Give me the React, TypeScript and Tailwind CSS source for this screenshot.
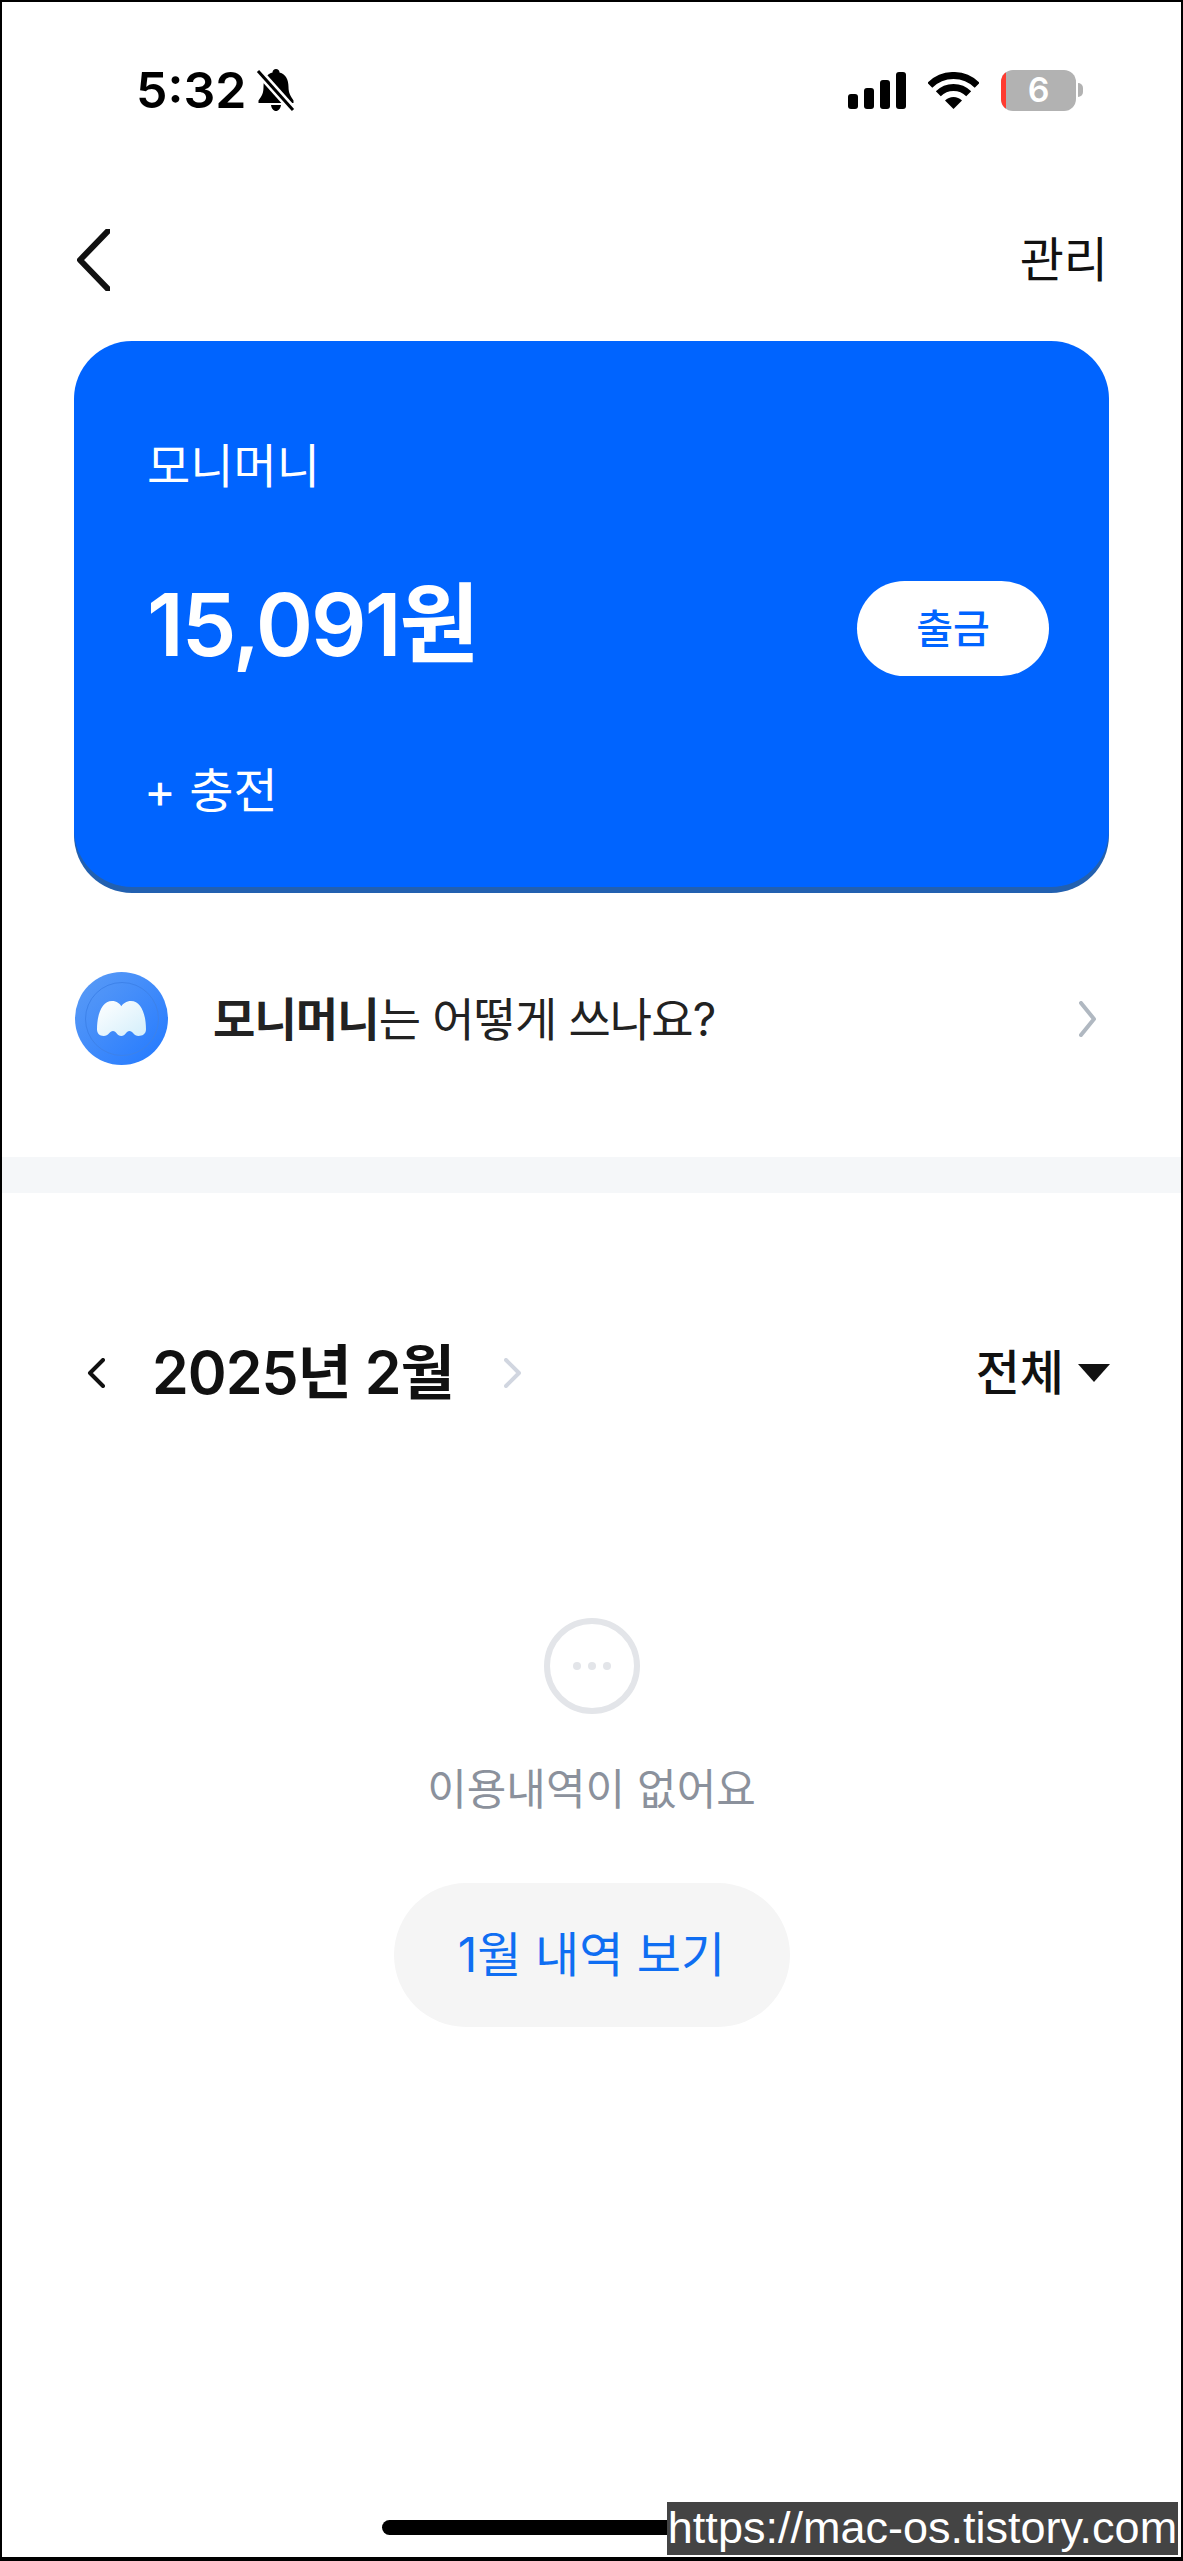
function BellSlash() {
  return (
    <svg width="40" height="42" viewBox="0 0 40 42">
      <path
        fill="#000"
        d="M20 0c2 0 3.500 1.500 3.500 3.500C30 5 32.500 11 32.500 18c0 6 2 9 5 13.500V34H2.500v-2.500C6 27 7.500 24 7.500 18c0-7 2.500-13 9-14.500C16.500 1.500 18 0 20 0zM15 36h10c-.5 3.500-2.500 6-5 6s-4.500-2.500-5-6z"
      />
      <path d="M3 3l34 38" stroke="#fff" strokeWidth="8" />
      <path d="M2 2l35 39" stroke="#000" strokeWidth="3" />
    </svg>
  );
}

function Signal() {
  return (
    <div className="flex items-end gap-[6px] h-[37px]">
      <div className="w-[10px] h-[15px] rounded-[3px] bg-black" />
      <div className="w-[10px] h-[21px] rounded-[3px] bg-black" />
      <div className="w-[10px] h-[29px] rounded-[3px] bg-black" />
      <div className="w-[10px] h-[37px] rounded-[3px] bg-black" />
    </div>
  );
}

function Wifi() {
  return (
    <svg width="51" height="37" viewBox="0 0 51 37">
      <path d="M1.800 13.300A33.500 33.500 0 0 1 49.200 13.300" fill="none" stroke="#000" strokeWidth="7" />
      <path d="M10.300 21.800A21.500 21.500 0 0 1 40.700 21.800" fill="none" stroke="#000" strokeWidth="7" />
      <path d="M25.500 37L17 28.500A12 12 0 0 1 34 28.500Z" fill="#000" />
    </svg>
  );
}

function Battery() {
  return (
    <div className="flex items-center gap-[2px]">
      <div className="flex w-[75px] h-[41px] rounded-[12px] overflow-hidden bg-[#b2b2b2]">
        <div className="w-[5px] bg-[#ff3b30]" />
        <div className="flex-1 flex items-center justify-center text-white font-semibold text-[34px] leading-none pr-[5px]">
          6
        </div>
      </div>
      <div className="w-[5px] h-[14px] rounded-r-full bg-[#b2b2b2]" />
    </div>
  );
}

function MoniCoin() {
  return (
    <div className="w-[93px] h-[93px] shrink-0 rounded-full bg-gradient-to-br from-[#5c9cf5] to-[#1f78ff] flex items-center justify-center">
      <div className="w-[74px] h-[74px] rounded-full border border-[#3d82ea] flex items-center justify-center">
        <svg width="49" height="35" viewBox="0 0 147 105">
          <defs>
            <linearGradient id="moni" x1="0" y1="0" x2="1" y2="1">
              <stop offset="0" stopColor="#ffffff" />
              <stop offset="1" stopColor="#d3eefb" />
            </linearGradient>
          </defs>
          <path
            fill="url(#moni)"
            d="M0 85C0 40 15 0 45 0C60 0 68 8 73 16C78 8 88 0 102 0C132 0 147 40 147 85C147 100 135 105 125 105C110 105 108 90 97 90C88 90 85 105 73 105C60 105 58 90 48 90C38 90 35 105 20 105C8 105 0 98 0 85Z"
          />
        </svg>
      </div>
    </div>
  );
}

function Chevron({ dir, color, w, h, sw }: { dir: "left" | "right"; color: string; w: number; h: number; sw: number }) {
  const d = dir === "left" ? `M${w - 2} 2L3 ${h / 2}L${w - 2} ${h - 2}` : `M2 2L${w - 3} ${h / 2}L2 ${h - 2}`;
  return (
    <svg width={w} height={h} viewBox={`0 0 ${w} ${h}`}>
      <path d={d} fill="none" stroke={color} strokeWidth={sw} strokeLinecap="round" strokeLinejoin="round" />
    </svg>
  );
}

export default function App() {
  return (
    <div className="relative flex flex-col w-[1183px] h-[2561px] bg-white border-x-2 border-t-2 border-b-[4px] border-black overflow-hidden font-['Inter','Noto_Sans_CJK_KR',sans-serif] text-[#111]">
      {/* status bar */}
      <div className="flex items-center justify-between h-[176px] pl-[134px] pr-[98px]">
        <div className="flex items-center gap-[10px]">
          <span className="text-[50px] leading-none font-semibold text-black">5:32</span>
          <BellSlash />
        </div>
        <div className="flex items-center gap-[22px]">
          <Signal />
          <Wifi />
          <Battery />
        </div>
      </div>

      {/* nav */}
      <div className="flex items-center justify-between h-[163px] pl-[75px] pr-[73px]">
        <Chevron dir="left" color="#111" w={33} h={62} sw={6} />
        <span className="text-[48px] leading-none">관리</span>
      </div>

      {/* card */}
      <div className="mx-[72px] h-[546px] rounded-[58px] bg-[#0064ff] shadow-[0_6px_0_0_#2260b0] text-white flex flex-col pl-[73px] pr-[60px]">
        <div className="mt-[97px] text-[47px] leading-[56px]">모니머니</div>
        <div className="mt-[87px] flex items-center justify-between h-[95px]">
          <span className="text-[87px] leading-none font-semibold tracking-[-2px] pb-[9px]">15,091원</span>
          <button className="w-[192px] h-[95px] rounded-full bg-white text-[#0064ff] text-[40px] font-medium">
            출금
          </button>
        </div>
        <div className="mt-[87px] -ml-[3px] text-[48px] leading-[56px]">+ 충전</div>
      </div>

      {/* how to use */}
      <div className="flex items-center justify-between pl-[73px] pr-[84px] mt-[85px] mb-[92px]">
        <div className="flex items-center gap-[45px]">
          <MoniCoin />
          <span className="text-[46px] leading-[56px] text-[#222] tracking-[-0.9px]">
            <b className="font-bold">모니머니</b>는 어떻게 쓰나요?
          </span>
        </div>
        <Chevron dir="right" color="#b0b8c1" w={18} h={36} sw={4} />
      </div>

      <div className="h-[36px] bg-[#f5f7f9]" />

      {/* month */}
      <div className="flex items-center justify-between pl-[85px] pr-[71px] pt-[144px] h-[215px]">
        <div className="flex items-center">
          <Chevron dir="left" color="#111" w={18} h={30} sw={4} />
          <span className="ml-[47px] text-[59px] leading-none font-semibold tracking-[-1px]">2025년 2월</span>
          <span className="ml-[50px]">
            <Chevron dir="right" color="#d1d6e0" w={18} h={30} sw={4} />
          </span>
        </div>
        <div className="flex items-center gap-[14px]">
          <span className="text-[48px] leading-none font-medium">전체</span>
          <div className="w-0 h-0 border-x-[16px] border-x-transparent border-t-[18px] border-t-[#111]" />
        </div>
      </div>

      {/* empty */}
      <div className="flex flex-col items-center mt-[210px]">
        <div className="w-[96px] h-[96px] rounded-full border-[6px] border-[#e3e5e9] flex items-center justify-center gap-[7px]">
          <div className="w-[8px] h-[8px] rounded-full bg-[#e3e5e9]" />
          <div className="w-[8px] h-[8px] rounded-full bg-[#e3e5e9]" />
          <div className="w-[8px] h-[8px] rounded-full bg-[#e3e5e9]" />
        </div>
        <div className="mt-[47px] text-[43px] leading-[56px] text-[#8b919c]">이용내역이 없어요</div>
        <button className="mt-[66px] w-[396px] h-[144px] rounded-full bg-[#f5f5f5] text-[#0f6ef2] text-[48px]">
          1월 내역 보기
        </button>
      </div>

      {/* home indicator */}
      <div className="mt-auto mb-[22px] ml-[380px] w-[420px] h-[15px] rounded-full bg-black" />

      {/* watermark over the page */}
      <div className="absolute right-[3px] bottom-[2px] w-[511px] h-[53px] bg-[#444] text-white text-[45px] leading-[51px] text-center font-['Liberation_Sans',sans-serif] whitespace-nowrap">
        https://mac-os.tistory.com
      </div>
    </div>
  );
}
